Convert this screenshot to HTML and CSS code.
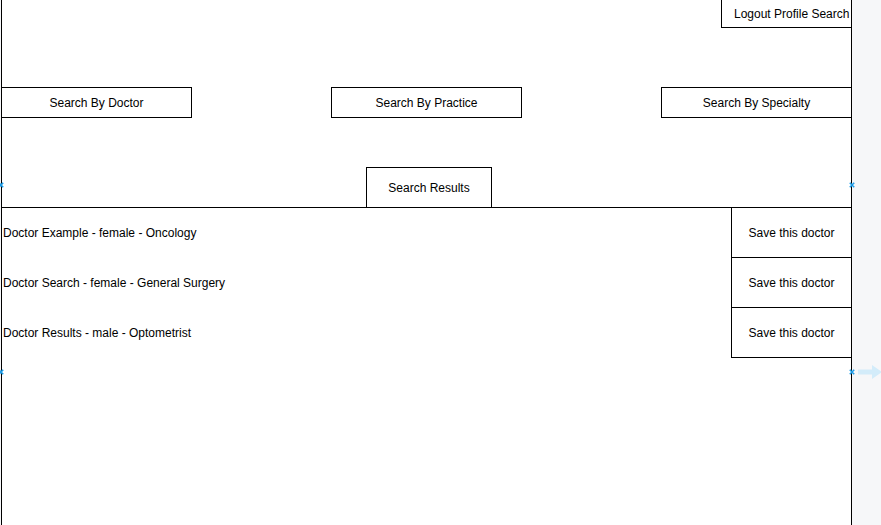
FILE: index.html
```html
<!DOCTYPE html>
<html lang="en">
<head>
    <meta charset="UTF-8">
    <meta name="viewport" content="width=device-width, initial-scale=1.0">
    <title>Doctor Search</title>
    <link rel="stylesheet" href="styles.css">
</head>
<body>
    <div class="canvas">
        <div class="topbar">
            <div class="nav-box">Logout Profile Search</div>
        </div>
        <div class="search-modes">
            <button class="mode-button">Search By Doctor</button>
            <button class="mode-button">Search By Practice</button>
            <button class="mode-button">Search By Specialty</button>
        </div>
        <div class="tab-row">
            <div class="results-tab">Search Results</div>
        </div>
        <div class="results">
            <div class="result-row">
                <div class="doctor-info">Doctor Example - female - Oncology</div>
                <button class="save-button">Save this doctor</button>
            </div>
            <div class="result-row">
                <div class="doctor-info">Doctor Search - female - General Surgery</div>
                <button class="save-button">Save this doctor</button>
            </div>
            <div class="result-row">
                <div class="doctor-info">Doctor Results - male - Optometrist</div>
                <button class="save-button">Save this doctor</button>
            </div>
        </div>

        <!-- connection points of the selected group -->
        <svg class="marker marker-left marker-top" viewBox="0 0 6 6"><path d="M0.8 0.8L5.2 5.2M5.2 0.8L0.8 5.2"/></svg>
        <svg class="marker marker-right marker-top" viewBox="0 0 6 6"><path d="M0.8 0.8L5.2 5.2M5.2 0.8L0.8 5.2"/></svg>
        <svg class="marker marker-left marker-bottom" viewBox="0 0 6 6"><path d="M0.8 0.8L5.2 5.2M5.2 0.8L0.8 5.2"/></svg>
        <svg class="marker marker-right marker-bottom" viewBox="0 0 6 6"><path d="M0.8 0.8L5.2 5.2M5.2 0.8L0.8 5.2"/></svg>
    </div>

    <svg class="hover-arrow" viewBox="0 0 24 14"><path d="M0 4.5H14V0L24 7L14 14V9.5H0Z"/></svg>
</body>
</html>
```

FILE: styles.css
```css
body {
    margin: 0;
    background: #f6f7f9;
    font-family: "Liberation Sans", Arial, sans-serif;
    font-size: 12px;
    color: #000;
    overflow: hidden;
}
.canvas {
    position: relative;
    box-sizing: border-box;
    width: 851px;
    height: 525px;
    margin-left: 1px;
    background: #fff;
    border-left: 1px solid #000;
    border-right: 1px solid #000;
}
.topbar {
    display: flex;
    justify-content: flex-end;
    height: 28px;
}
.nav-box {
    box-sizing: border-box;
    width: 130px;
    height: 28px;
    display: flex;
    align-items: center;
    padding-left: 12px;
    border-left: 1px solid #000;
    border-bottom: 1px solid #000;
    white-space: nowrap;
}
.search-modes {
    display: flex;
    justify-content: space-between;
    margin: 59px -1px 0 -1px;
}
.mode-button {
    box-sizing: border-box;
    width: 191px;
    height: 31px;
    padding: 0;
    border: 1px solid #000;
    background: #fff;
    font-family: inherit;
    font-size: 12px;
    color: #000;
}
.tab-row {
    display: flex;
    margin-top: 49px;
}
.results-tab {
    box-sizing: border-box;
    width: 126px;
    height: 40px;
    margin-left: 364px;
    display: flex;
    align-items: center;
    justify-content: center;
    border: 1px solid #000;
    border-bottom: none;
}
.results {
    border-top: 1px solid #000;
}
.result-row {
    display: flex;
    height: 50px;
}
.doctor-info {
    flex: 1;
    display: flex;
    align-items: center;
    padding: 0 0 1px 1px;
}
.save-button {
    box-sizing: border-box;
    width: 120px;
    height: 50px;
    padding: 0;
    border: none;
    border-left: 1px solid #000;
    border-bottom: 1px solid #000;
    background: #fff;
    font-family: inherit;
    font-size: 12px;
    color: #000;
}
.marker {
    position: absolute;
    width: 6px;
    height: 6px;
    fill: none;
    stroke: #1e9de8;
    stroke-width: 1.6;
}
.marker-left {
    left: -4px;
}
.marker-right {
    right: -4px;
}
.marker-top {
    top: 182px;
}
.marker-bottom {
    top: 369px;
}
.hover-arrow {
    position: absolute;
    left: 858px;
    top: 365px;
    width: 24px;
    height: 14px;
    fill: #d3ecfa;
}
```
